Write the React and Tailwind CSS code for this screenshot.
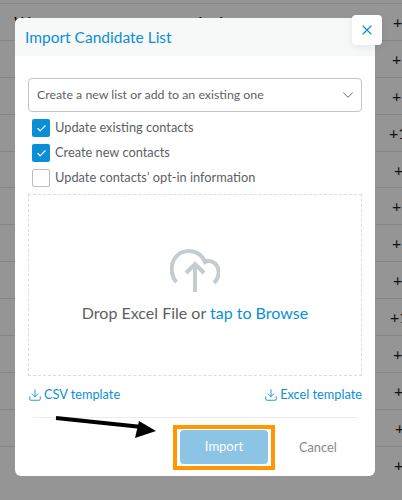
import React from "react";
import { Check, ChevronDown, Download, X } from "lucide-react";

// phone column behind the dialog, cut off by the window edge
const rows = [
  "pl-[392px]",
  "pl-[392px]",
  "pl-[389px]",
  "pl-[394px]",
  "pl-[392px]",
  "pl-[392px]",
  "pl-[393px]",
  "pl-[390px]",
  "pl-[393px]",
  "pl-[394px]",
  "pl-[395px]",
  "pl-[394px]",
];

const options = [
  { label: "Update existing contacts", checked: true },
  { label: "Create new contacts", checked: true },
  { label: "Update contacts' opt-in information", checked: false },
];

const CloudIcon = () => (
  <svg width="50" height="44" viewBox="0 0 50 44" fill="none" stroke="#c3cbd3" strokeWidth="4">
    <path d="M6.5 33 C1 27 0.5 18 3.5 11.5 C7 5 13 2 18 2 C26 2 32 6 35 13 C38 11 44 12 47 17 C50 22 49 29 44 34" />
    <path d="M25 43 V15 M16 24 L25 15 L34 24" />
  </svg>
);

const Arrow = () => (
  <svg className="absolute left-[50px] top-[410px]" width="110" height="34" viewBox="0 0 110 34">
    <path d="M6 8 L92 17" stroke="#000" strokeWidth="4" />
    <path d="M106 21 L89 11 L85 28 Z" fill="#000" />
  </svg>
);

export default function App() {
  return (
    <div className="relative h-[500px] w-[402px] overflow-hidden bg-[#959595] font-['Lato',sans-serif]">
      {/* table behind the overlay */}
      <div className="pt-[3px]">
        <div className="flex h-[36.9px] items-center whitespace-nowrap border-t border-[#858585] pt-[1px] text-[16px] text-[#111]">
          <span className="ml-[14px] w-[181px] shrink-0">Wa</span>
          <span className="w-[198px] shrink-0">Action</span>
          <span className="shrink-0">+1 555</span>
        </div>
        {rows.map((pad, i) => (
          <div
            key={i}
            className={`flex h-[36.9px] items-center whitespace-nowrap border-t border-[#858585] text-[16px] text-[#111] ${pad}`}
          >
            +1 555
          </div>
        ))}
      </div>

      {/* dialog */}
      <div className="absolute left-[15px] top-[18px] flex h-[458px] w-[360px] flex-col rounded-[6px] bg-white">
        <div className="flex h-[38px] items-center rounded-t-[6px] bg-[#f7f8f8] pl-[10px] pt-[1px] text-[15.5px] text-[#0a8fd6]">
          Import Candidate List
        </div>

        <div className="flex flex-1 flex-col px-[13px] pt-[22px]">
          <div className="flex h-[34px] items-center justify-between rounded-[4px] border border-[#c4c4c4] pl-[8px] pr-[4px] text-[12.35px] text-[#5c5f62]">
            Create a new list or add to an existing one
            <ChevronDown size={18} strokeWidth={1.25} className="text-[#5c5f62]" />
          </div>

          <div className="mt-[7px] flex flex-col gap-[7px] pl-[4px]">
            {options.map((opt) => (
              <label key={opt.label} className="flex h-[18px] items-center gap-[5px] text-[12.8px] text-[#5c5f62]">
                {opt.checked ? (
                  <span className="flex h-[18px] w-[18px] items-center justify-center rounded-[2px] bg-[#0a8fd6]">
                    <Check size={11} strokeWidth={2.5} className="text-white" />
                  </span>
                ) : (
                  <span className="h-[18px] w-[18px] rounded-[2px] border border-[#bdbdbd] bg-white" />
                )}
                {opt.label}
              </label>
            ))}
          </div>

          <div className="mt-[7px] flex h-[182px] flex-col items-center border border-dashed border-[#dcdcdc] pt-[54px]">
            <CloudIcon />
            <p className="mt-[8px] text-[16px] text-[#5c5f62]">
              Drop Excel File or <span className="text-[#0a8fd6]">tap to Browse</span>
            </p>
          </div>

          <div className="mt-[9px] flex items-center justify-between text-[12.75px] text-[#0a8fd6]">
            <span className="flex items-center gap-[2px]">
              <Download size={14} strokeWidth={1.5} />
              CSV template
            </span>
            <span className="flex items-center gap-[2px]">
              <Download size={14} strokeWidth={1.5} />
              Excel template
            </span>
          </div>

          <div className="mx-[5px] mt-[13px] h-px bg-[#ebebeb]" />

          <div className="mt-[7px] flex items-center pl-[145px]">
            <div className="border-[4px] border-[#ff9800] px-[3px] pb-[2px] pt-[1px]">
              <button className="block h-[34px] w-[88px] rounded-[4px] bg-[#8cc4e6] text-[13px] text-white">Import</button>
            </div>
            <span className="ml-[24px] text-[12.75px] text-[#85888a]">Cancel</span>
          </div>
        </div>
      </div>

      {/* close button sits over the dialog corner */}
      <button className="absolute left-[352px] top-[15px] flex h-[30px] w-[30px] items-center justify-center rounded-[4px] bg-white shadow-[0_2px_8px_rgba(0,0,0,0.08)]">
        <X size={16} strokeWidth={1.75} className="text-[#0a8fd6]" />
      </button>

      <Arrow />
    </div>
  );
}
